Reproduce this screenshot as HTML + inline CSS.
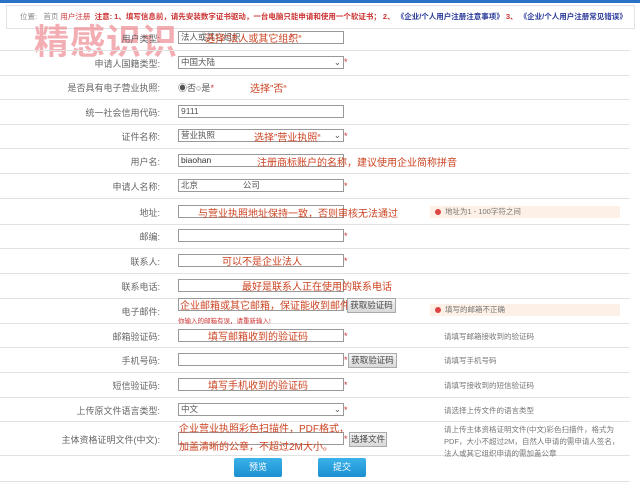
<!DOCTYPE html><html><head><meta charset="utf-8"><style>
body{margin:0;width:640px;height:483px;background:#fff;position:relative;overflow:hidden;font-family:"Liberation Sans","Noto Sans CJK SC",sans-serif;font-size:9px;color:#555}
.a{position:absolute;white-space:nowrap}
.sep{position:absolute;left:0;width:630px;height:1px;background:#e2e2e2}
.lb{position:absolute;right:480px;text-align:right;color:#666;font-size:9px;white-space:nowrap}
.in{position:absolute;left:178px;width:162px;height:11px;border:1px solid #999;background:#fff;font-size:8.5px;line-height:11px;padding-left:2px;color:#555;white-space:nowrap}
.st{position:absolute;color:#c33;font-size:9px}
.r{position:absolute;color:#c42;font-size:10px;white-space:nowrap}
.h{position:absolute;left:444px;color:#777;font-size:7.5px;white-space:nowrap}
.btn{position:absolute;width:47px;height:13px;border:1px solid #aaa;background:linear-gradient(#f4f4f4,#d8d8d8);font-size:8.5px;text-align:center;line-height:13px;color:#444;white-space:nowrap}
.warn{position:absolute;left:430px;width:190px;height:12px;background:#fdf0e6;font-size:7.5px;line-height:12px;color:#777;white-space:nowrap}
.warn i{display:inline-block;width:6px;height:6px;border-radius:50%;background:#d44;margin:0 4px 0 5px;vertical-align:-1px}
.bb{position:absolute;top:458px;width:48px;height:19px;background:linear-gradient(#3bb2ea,#1b8fd0);color:#fff;font-size:9px;text-align:center;line-height:19px;border-radius:2px}
</style></head><body>
<div class="a" style="left:0;top:0;width:640px;height:3px;background:#2a72c8"></div>
<div class="a" style="left:6px;top:5px;width:627px;height:22px;border:1px solid #e3e3e3"></div>
<div class="a" style="left:20px;top:11px;font-size:7.5px;color:#888">位置: &nbsp; 首页 <span style="color:#c33">用户注册</span> &nbsp;<b style="color:#c33">注意: 1、填写信息前，请先安装数字证书驱动，一台电脑只能申请和使用一个软证书； 2、</b> <b style="color:#2a3a9a">《企业/个人用户注册注意事项》</b><b style="color:#c33"> 3、</b> <b style="color:#2a3a9a">《企业/个人用户注册常见错误》</b></div>
<div class="a" style="left:34px;top:14px;font-size:35px;color:rgba(236,130,140,0.65);letter-spacing:1px;font-weight:bold">精感识识</div>

<div class="sep" style="top:50px"></div><div class="sep" style="top:75px"></div><div class="sep" style="top:99px"></div><div class="sep" style="top:124px"></div><div class="sep" style="top:148px"></div><div class="sep" style="top:173px"></div><div class="sep" style="top:198px"></div><div class="sep" style="top:224px"></div><div class="sep" style="top:248px"></div><div class="sep" style="top:273px"></div><div class="sep" style="top:298px"></div><div class="sep" style="top:323px"></div><div class="sep" style="top:347px"></div><div class="sep" style="top:372px"></div><div class="sep" style="top:397px"></div><div class="sep" style="top:421px"></div><div class="sep" style="top:455px"></div><div class="sep" style="top:481px"></div>

<div class="lb" style="top:32px">用户类型:</div><div class="in" style="top:31px">法人或其它组织</div><div class="r" style="left:205px;top:30px">选择”法人或其它组织“</div><div class="st" style="left:290px;top:32px">*</div>
<div class="lb" style="top:57px">申请人国籍类型:</div><div class="in" style="top:56px">中国大陆<span style="position:absolute;right:2px">⌄</span></div><div class="st" style="left:344px;top:57px">*</div>
<div class="lb" style="top:81px">是否具有电子营业执照:</div><div class="a" style="left:178px;top:81px;color:#555">◉否○是<span style="color:#c33">*</span></div><div class="r" style="left:250px;top:80px">选择”否“</div>
<div class="lb" style="top:106px">统一社会信用代码:</div><div class="in" style="top:105px">9111</div>
<div class="lb" style="top:130px">证件名称:</div><div class="in" style="top:129px">营业执照<span style="position:absolute;right:2px">⌄</span></div><div class="r" style="left:254px;top:129px">选择”营业执照“</div><div class="st" style="left:344px;top:131px">*</div>
<div class="lb" style="top:155px">用户名:</div><div class="in" style="top:154px;color:#333">biaohan</div><div class="r" style="left:257px;top:154px">注册商标账户的名称，建议使用企业简称拼音</div>
<div class="lb" style="top:180px">申请人名称:</div><div class="in" style="top:179px">北京 &nbsp; &nbsp; &nbsp; &nbsp; &nbsp; &nbsp; &nbsp; &nbsp; &nbsp; 公司</div><div class="st" style="left:344px;top:181px">*</div>
<div class="lb" style="top:206px">地址:</div><div class="in" style="top:205px"></div><div class="r" style="left:198px;top:205px">与营业执照地址保持一致，否则审核无法通过</div><div class="warn" style="top:206px"><i></i>地址为1 - 100字符之间</div>
<div class="lb" style="top:230px">邮编:</div><div class="in" style="top:229px"></div><div class="st" style="left:344px;top:231px">*</div>
<div class="lb" style="top:255px">联系人:</div><div class="in" style="top:254px"></div><div class="r" style="left:222px;top:253px">可以不是企业法人</div><div class="st" style="left:344px;top:256px">*</div>
<div class="lb" style="top:280px">联系电话:</div><div class="in" style="top:279px"></div><div class="r" style="left:242px;top:278px">最好是联系人正在使用的联系电话</div>
<div class="lb" style="top:305px">电子邮件:</div><div class="in" style="top:298px"></div><div class="r" style="left:180px;top:297px">企业邮箱或其它邮箱，保证能收到邮件</div><div class="btn" style="left:347px;top:298px">获取验证码</div><div class="a" style="left:178px;top:315px;font-size:6.5px;color:#c33">你输入的邮箱有误，请重新输入!</div><div class="warn" style="top:304px"><i></i>填写的邮箱不正确</div>
<div class="lb" style="top:330px">邮箱验证码:</div><div class="in" style="top:329px"></div><div class="r" style="left:208px;top:328px">填写邮箱收到的验证码</div><div class="st" style="left:344px;top:331px">*</div><div class="h" style="top:331px">请填写邮箱接收到的验证码</div>
<div class="lb" style="top:354px">手机号码:</div><div class="in" style="top:353px"></div><div class="st" style="left:344px;top:355px">*</div><div class="btn" style="left:348px;top:353px">获取验证码</div><div class="h" style="top:355px">请填写手机号码</div>
<div class="lb" style="top:379px">短信验证码:</div><div class="in" style="top:378px"></div><div class="r" style="left:208px;top:377px">填写手机收到的验证码</div><div class="st" style="left:344px;top:380px">*</div><div class="h" style="top:380px">请填写接收到的短信验证码</div>
<div class="lb" style="top:404px">上传原文件语言类型:</div><div class="in" style="top:403px">中文<span style="position:absolute;right:2px">⌄</span></div><div class="st" style="left:344px;top:405px">*</div><div class="h" style="top:405px">请选择上传文件的语言类型</div>
<div class="lb" style="top:433px">主体资格证明文件(中文):</div><div class="in" style="top:432px"></div><div class="r" style="left:179px;top:420px">企业营业执照彩色扫描件，PDF格式，</div><div class="r" style="left:179px;top:438px">加盖清晰的公章，不超过2M大小。</div><div class="st" style="left:344px;top:434px">*</div><div class="btn" style="left:349px;top:432px;width:36px">选择文件</div>
<div class="h" style="top:424px;line-height:12px;white-space:normal;width:180px">请上传主体资格证明文件(中文)彩色扫描件，格式为PDF，大小不超过2M，自然人申请的需申请人签名，法人或其它组织申请的需加盖公章</div>
<div class="bb" style="left:234px">预览</div><div class="bb" style="left:318px">提交</div>
</body></html>
